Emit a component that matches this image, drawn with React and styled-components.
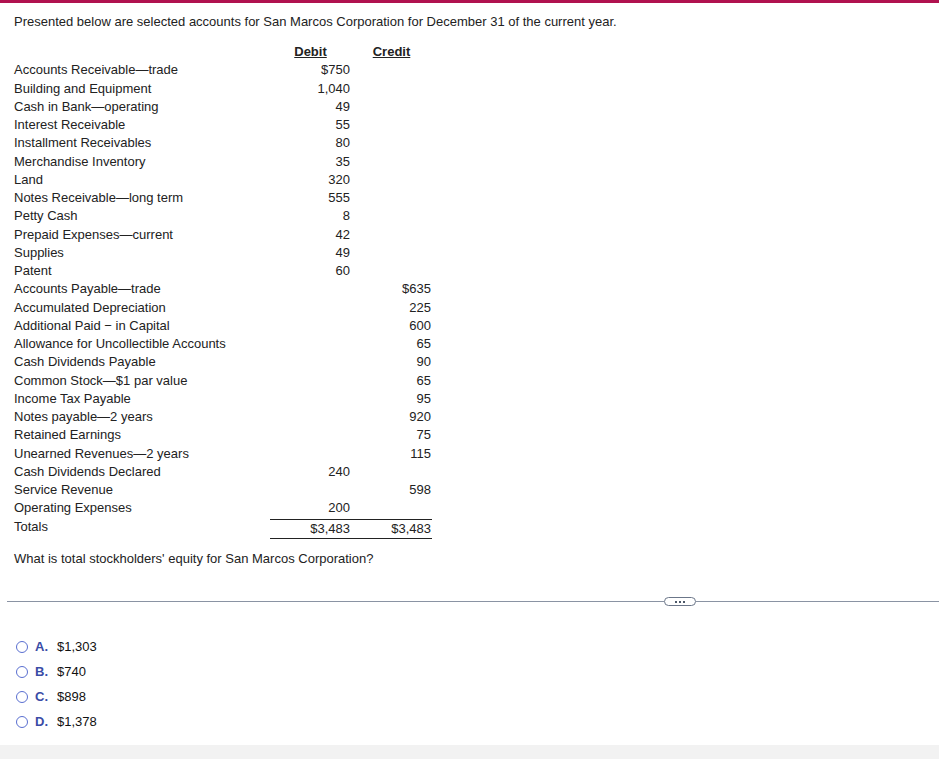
import React from "react";
import styled, { createGlobalStyle } from "styled-components";

const GlobalStyle = createGlobalStyle`
  html, body {
    margin: 0;
    padding: 0;
    background: #ffffff;
  }
  body {
    font-family: "Liberation Sans", Arial, sans-serif;
    font-size: 13px;
    color: #222222;
  }
`;

const debits = [
  ["Accounts Receivable\u2014trade", "$750", ""],
  ["Building and Equipment", "1,040", ""],
  ["Cash in Bank\u2014operating", "49", ""],
  ["Interest Receivable", "55", ""],
  ["Installment Receivables", "80", ""],
  ["Merchandise Inventory", "35", ""],
  ["Land", "320", ""],
  ["Notes Receivable\u2014long term", "555", ""],
  ["Petty Cash", "8", ""],
  ["Prepaid Expenses\u2014current", "42", ""],
  ["Supplies", "49", ""],
  ["Patent", "60", ""],
  ["Accounts Payable\u2014trade", "", "$635"],
  ["Accumulated Depreciation", "", "225"],
  ["Additional Paid \u2212 in Capital", "", "600"],
  ["Allowance for Uncollectible Accounts", "", "65"],
  ["Cash Dividends Payable", "", "90"],
  ["Common Stock\u2014$1 par value", "", "65"],
  ["Income Tax Payable", "", "95"],
  ["Notes payable\u20142 years", "", "920"],
  ["Retained Earnings", "", "75"],
  ["Unearned Revenues\u20142 years", "", "115"],
  ["Cash Dividends Declared", "240", ""],
  ["Service Revenue", "", "598"],
  ["Operating Expenses", "200", ""],
];

const options = [
  ["A.", "$1,303"],
  ["B.", "$740"],
  ["C.", "$898"],
  ["D.", "$1,378"],
];

const App = () => {
  return (
    <Page>
      <GlobalStyle />
      <TopBar />
      <Content>
        <Intro>
          Presented below are selected accounts for San Marcos Corporation for
          December 31 of the current year.
        </Intro>
        <Ledger>
          <Cell />
          <Heading>Debit</Heading>
          <Heading>Credit</Heading>
          {debits.map(([name, dr, cr]) => (
            <React.Fragment key={name}>
              <Cell>{name}</Cell>
              <Amount>{dr}</Amount>
              <Amount>{cr}</Amount>
            </React.Fragment>
          ))}
          <Cell>Totals</Cell>
          <Amount $total>$3,483</Amount>
          <Amount $total>$3,483</Amount>
        </Ledger>
        <Question>What is total stockholders' equity for San Marcos Corporation?</Question>
      </Content>
      <Divider>
        <Line />
        <MoreButton>
          <Dot />
          <Dot />
          <Dot />
        </MoreButton>
        <Line />
      </Divider>
      <Choices>
        {options.map(([letter, value]) => (
          <Choice key={letter}>
            <Radio />
            <Letter>{letter}</Letter>
            <span>{value}</span>
          </Choice>
        ))}
      </Choices>
      <Footer />
    </Page>
  );
};

const Page = styled.div`
  width: 939px;
  min-height: 759px;
  display: flex;
  flex-direction: column;
`;

const TopBar = styled.div`
  height: 3px;
  background: #b0124f;
`;

const Content = styled.div`
  padding: 0 14px;
`;

const Intro = styled.p`
  margin: 11px 0 0;
  line-height: 15px;
`;

const Ledger = styled.div`
  display: grid;
  grid-template-columns: 256px 81px 81px;
  grid-auto-rows: 18.25px;
  margin-top: 14px;
  width: max-content;
`;

const Cell = styled.div`
  line-height: 18.25px;
  white-space: nowrap;
`;

const Heading = styled.div`
  font-weight: bold;
  text-decoration: underline;
  text-align: center;
  line-height: 18.25px;
`;

const Amount = styled.div`
  text-align: right;
  padding-right: 1px;
  line-height: ${(p) => (p.$total ? "17px" : "18.25px")};
  border-top: ${(p) => (p.$total ? "1px solid #222" : "none")};
  border-bottom: ${(p) => (p.$total ? "1px solid #222" : "none")};
  margin-top: ${(p) => (p.$total ? "1px" : "0")};
  height: ${(p) => (p.$total ? "18px" : "auto")};
`;

const Question = styled.p`
  margin: 15px 0 0;
  line-height: 15px;
`;

const Divider = styled.div`
  display: flex;
  align-items: center;
  margin: 31px 0 0 7px;
  height: 10px;
`;

const Line = styled.div`
  height: 1px;
  background: #8a93a3;
  &:first-child {
    width: 657px;
  }
  &:last-child {
    flex: 1;
  }
`;

const MoreButton = styled.div`
  width: 30px;
  height: 7px;
  border: 1px solid #6b7689;
  border-radius: 5px;
  display: flex;
  align-items: center;
  justify-content: center;
  gap: 2px;
  background: #fff;
`;

const Dot = styled.span`
  width: 2px;
  height: 2px;
  background: #4d5869;
`;

const Choices = styled.div`
  display: flex;
  flex-direction: column;
  gap: 7px;
  padding: 31px 0 0 16px;
`;

const Choice = styled.div`
  display: flex;
  align-items: center;
  height: 18px;
  line-height: 18px;
  color: #111;
`;

const Radio = styled.span`
  width: 12px;
  height: 12px;
  border: 1.3px solid #5a6fd0;
  border-radius: 50%;
  box-sizing: border-box;
  margin-right: 7px;
`;

const Letter = styled.span`
  font-weight: bold;
  color: #3a4ca6;
  width: 22px;
`;

const Footer = styled.div`
  margin-top: auto;
  height: 14px;
  background: #f2f2f2;
`;

export default App;
